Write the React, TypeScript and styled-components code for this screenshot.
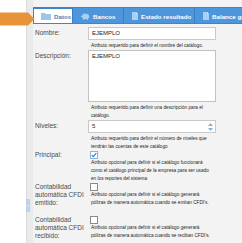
import styled, { createGlobalStyle } from 'styled-components';

const GlobalStyle = createGlobalStyle`
  html, body {
    margin: 0;
    padding: 0;
    background: #fff;
    font-family: 'Liberation Sans', Arial, sans-serif;
  }
  * { box-sizing: border-box; }
`;

const tabs = [
  { label: 'Datos', icon: 'folder', width: 40, active: true },
  { label: 'Bancos', icon: 'piggy', width: 51 },
  { label: 'Estado resultado', icon: 'doc', width: 71 },
  { label: 'Balance general', icon: 'doc', width: 80 },
];

function TabIcon({ kind, active }: { kind: string; active?: boolean }) {
  const fill = active ? '#9cc6ee' : '#a9cff2';
  if (kind === 'folder') {
    return (
      <svg width="10" height="7" viewBox="0 0 10 7">
        <path d="M0 0h3.8l1 1H10v6H0z" fill={fill} />
      </svg>
    );
  }
  if (kind === 'piggy') {
    return (
      <svg width="9" height="7" viewBox="0 0 9 7">
        <ellipse cx="4.6" cy="3.4" rx="3.6" ry="2.6" fill={fill} />
        <path d="M2 1.2 2.6 0 3.6 1z" fill={fill} />
        <rect x="0" y="2.8" width="1.4" height="1.2" fill={fill} />
        <rect x="2.2" y="5" width="1.1" height="2" fill={fill} />
        <rect x="5.8" y="5" width="1.1" height="2" fill={fill} />
      </svg>
    );
  }
  return (
    <svg width="6" height="8" viewBox="0 0 6 8">
      <path d="M0 0h4l2 2v6H0z" fill={fill} />
      <path d="M4 0v2h2z" fill="#dcecfb" />
    </svg>
  );
}

export default function App() {
  return (
    <>
      <GlobalStyle />
      <Page>
        <Gutter />
        <Strip>
          <Handle>‹</Handle>
        </Strip>
        <Main>
          <TabBar>
            {tabs.map((t) => (
              <Tab key={t.label} $active={t.active} $width={t.width}>
                <TabIcon kind={t.icon} active={t.active} />
                <span>{t.label}</span>
              </Tab>
            ))}
          </TabBar>
          <Form>
            <Label>Nombre:</Label>
            <Field>
              <Input>EJEMPLO</Input>
              <Help>Atributo requerido para definir el nombre del catálogo.</Help>
            </Field>

            <Label>Descripción:</Label>
            <Field>
              <TextArea>EJEMPLO</TextArea>
              <Help>
                Atributo requerido para definir una descripción para el
                <br />
                catálogo.
              </Help>
            </Field>

            <Label>Niveles:</Label>
            <Field>
              <Input>
                5
                <Spinner>
                  <svg width="5" height="8" viewBox="0 0 5 8">
                    <path d="M2.5 0 5 3H0z" fill="#8eaed3" />
                    <path d="M2.5 8 5 5H0z" fill="#8eaed3" />
                  </svg>
                </Spinner>
              </Input>
              <Help>
                Atributo requerido para definir el número de niveles que
                <br />
                tendrán las cuentas de este catálogo
              </Help>
            </Field>

            <Label $check>Principal:</Label>
            <Field>
              <Check $checked>
                <svg width="7" height="6" viewBox="0 0 7 6">
                  <path d="M0.8 3.2 2.6 5 6.2 0.8" stroke="#2f7fd6" strokeWidth="1.4" fill="none" />
                </svg>
              </Check>
              <Help $tight>
                Atributo opcional para definir si el catálogo funcionará
                <br />
                como el catálogo principal de la empresa para ser usado
                <br />
                en los reportes del sistema
              </Help>
            </Field>

            <Label $check>Contabilidad automática CFDI emitido:</Label>
            <Field>
              <Check />
              <Help $tight>
                Atributo opcional para definir si el catálogo generará
                <br />
                pólizas de manera automática cuando se emitan CFDI's.
              </Help>
            </Field>

            <Label $check $spaced>
              Contabilidad automática CFDI recibido:
            </Label>
            <Field $spaced>
              <Check />
              <Help $tight>
                Atributo opcional para definir si el catálogo generará
                <br />
                pólizas de manera automática cuando se reciban CFDI's.
              </Help>
            </Field>
          </Form>
        </Main>
        <Arrow width="35" height="15" viewBox="0 0 35 15">
          <polygon points="0,0.5 28,0.5 34.5,7 28,13.5 0,13.5" fill="#e8923a" />
        </Arrow>
      </Page>
    </>
  );
}

const Page = styled.div`
  position: relative;
  display: flex;
  width: 242px;
  height: 243px;
  overflow: hidden;
`;

const Gutter = styled.div`
  width: 26px;
  flex-shrink: 0;
  background: #fff;
`;

const Strip = styled.div`
  width: 7px;
  flex-shrink: 0;
  background: #eaeaea;
  border-left: 1px solid #dcdcdc;
  padding-top: 199px;
`;

const Handle = styled.div`
  width: 4px;
  height: 13px;
  margin-left: -1px;
  background: #b8d3ee;
  color: #fff;
  font-size: 6px;
  line-height: 13px;
  text-align: center;
  overflow: hidden;
`;

const Main = styled.div`
  flex: 1;
  min-width: 0;
  background: #f3f3f3;
  padding-top: 7px;
`;

const TabBar = styled.div`
  display: flex;
  height: 17px;
  background: #4d96dc;
  border-top: 1px solid #3f84c8;
  border-bottom: 1px solid #3f84c8;
  overflow: hidden;
`;

const Tab = styled.div<{ $active?: boolean; $width: number }>`
  flex-shrink: 0;
  width: ${({ $width }) => $width}px;
  display: flex;
  align-items: center;
  gap: 3px;
  padding-left: 7px;
  font-size: 6.2px;
  font-weight: bold;
  white-space: nowrap;
  color: ${({ $active }) => ($active ? '#4d83bd' : '#fff')};
  background: ${({ $active }) => ($active ? '#fff' : 'transparent')};
  border: 1px solid ${({ $active }) => ($active ? '#3f84c8' : 'transparent')};
  border-right: 1px solid #3b7dc0;
  border-bottom: none;
`;

const Form = styled.div`
  display: grid;
  grid-template-columns: 53px 128px;
  padding: 3px 0 0 2px;
`;

const Label = styled.div<{ $check?: boolean; $spaced?: boolean }>`
  font-size: 6.5px;
  line-height: 7.8px;
  color: #4a4a4a;
  padding-top: ${({ $check }) => ($check ? 0 : 2)}px;
  margin-top: ${({ $spaced }) => ($spaced ? 9 : 0)}px;
`;

const Field = styled.div<{ $spaced?: boolean }>`
  display: flex;
  flex-direction: column;
  margin-top: ${({ $spaced }) => ($spaced ? 9 : 0)}px;
`;

const Input = styled.div`
  position: relative;
  height: 13px;
  background: #fff;
  border: 1px solid #c9c9c9;
  padding-left: 3px;
  font-size: 6px;
  line-height: 11px;
  color: #222;
`;

const Spinner = styled.span`
  position: absolute;
  right: 2px;
  top: 2px;
  line-height: 0;
`;

const TextArea = styled.div`
  height: 52px;
  background: #fff;
  border: 1px solid #c2c2c2;
  padding: 1px 3px;
  font-size: 6px;
  line-height: 8px;
  color: #222;
`;

const Check = styled.div<{ $checked?: boolean }>`
  width: 8px;
  height: 8px;
  margin-left: 2px;
  background: #fff;
  border: 1px solid ${({ $checked }) => ($checked ? '#8fb4dc' : '#8a8a8a')};
  display: flex;
  align-items: center;
  justify-content: center;
`;

const Help = styled.div<{ $tight?: boolean }>`
  margin-top: ${({ $tight }) => ($tight ? 0 : 2)}px;
  padding-left: 3px;
  font-size: 4.7px;
  line-height: 8px;
  color: #1e1e1e;
  white-space: nowrap;
`;

const Arrow = styled.svg`
  position: absolute;
  left: 0;
  top: 12px;
`;
